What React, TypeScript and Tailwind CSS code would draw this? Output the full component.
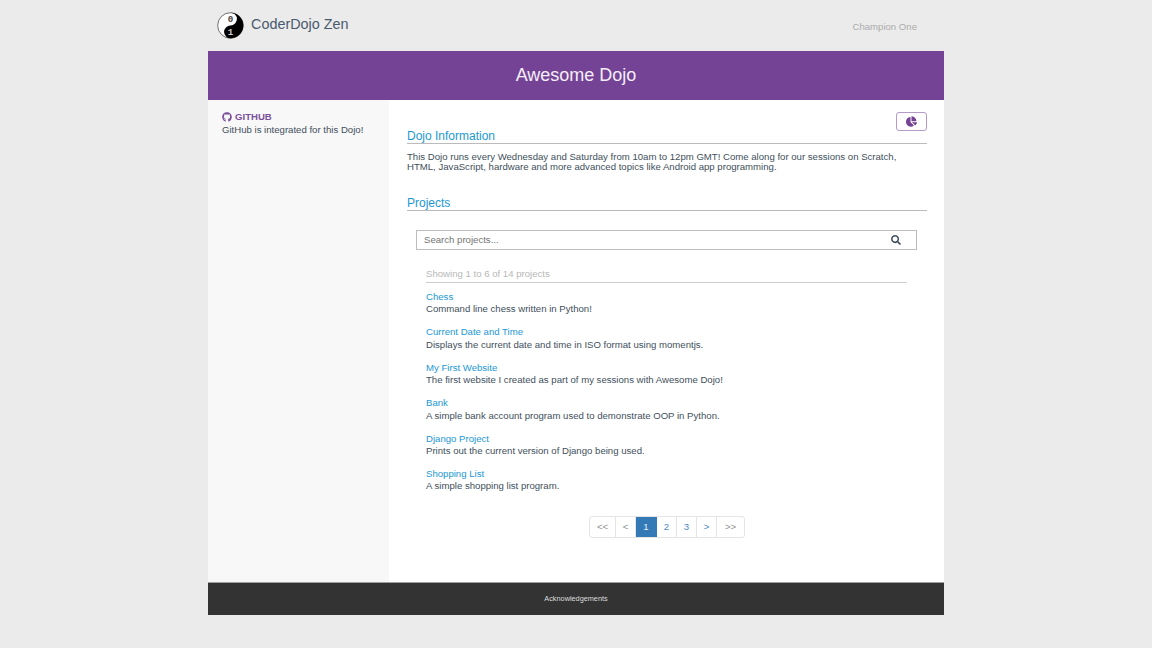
import { FaGithub, FaChartPie, FaSearch } from "react-icons/fa";

const projects = [
  { name: "Chess", desc: "Command line chess written in Python!" },
  { name: "Current Date and Time", desc: "Displays the current date and time in ISO format using momentjs." },
  { name: "My First Website", desc: "The first website I created as part of my sessions with Awesome Dojo!" },
  { name: "Bank", desc: "A simple bank account program used to demonstrate OOP in Python." },
  { name: "Django Project", desc: "Prints out the current version of Django being used." },
  { name: "Shopping List", desc: "A simple shopping list program." },
];

const pages = [
  { label: "<<", w: "w-[26px]" },
  { label: "<", w: "w-[20px]" },
  { label: "1", w: "w-[21px]", active: true },
  { label: "2", w: "w-[20px]", link: true },
  { label: "3", w: "w-[20px]", link: true },
  { label: ">", w: "w-[20px]", link: true },
  { label: ">>", w: "w-[27px]" },
];

function Logo() {
  return (
    <svg width="27" height="27" viewBox="0 0 28 28" className="shrink-0">
      <circle cx="14" cy="14" r="13.3" fill="#fff" stroke="#444" strokeWidth="0.8" />
      <path d="M14 .7a13.3 13.3 0 0 1 0 26.6a6.65 6.65 0 0 1 0-13.3a6.65 6.65 0 0 0 0-13.3z" fill="#000" />
      <circle cx="14" cy="7.4" r="5" fill="#fff" />
      <circle cx="14" cy="20.6" r="5" fill="#000" />
      <text x="14" y="10.8" textAnchor="middle" fontSize="9.5" fontFamily="Liberation Mono, monospace" fontWeight="700" fill="#444">0</text>
      <text x="14" y="24" textAnchor="middle" fontSize="9.5" fontFamily="Liberation Mono, monospace" fontWeight="700" fill="#ccc">1</text>
    </svg>
  );
}

export default function App() {
  return (
    <div className="min-h-[648px] bg-[#ebebeb] font-['Liberation_Sans',Arial,sans-serif] text-[9.6px] text-[#424f5c]">
      <div className="mx-auto w-[736px]">
        {/* Top bar */}
        <div className="flex h-[51px] items-center justify-between pl-[9px] pr-[27px]">
          <div className="flex items-center gap-[7px]">
            <Logo />
            <span className="mt-[-1px] text-[14.4px] text-[#4a5a6d]">CoderDojo Zen</span>
          </div>
          <span className="mt-[4px] text-[#ababab]">Champion One</span>
        </div>

        {/* Banner */}
        <div className="flex h-[49px] items-center justify-center bg-[#744395] text-[18px] text-[#f4eff7]">
          Awesome Dojo
        </div>

        <div className="flex h-[482px] bg-white">
          {/* Sidebar */}
          <div className="w-[181px] shrink-0 bg-[#f8f8f8] pl-[14px] pt-[11px]">
            <div className="flex items-center gap-[3px] font-bold leading-[12px] text-[#7d519b]">
              <FaGithub className="text-[10px]" />
              GITHUB
            </div>
            <p className="mt-[1px] leading-[12px]">GitHub is integrated for this Dojo!</p>
          </div>

          {/* Main */}
          <div className="flex-1 pl-[18px] pr-[17px] pt-[12px]">
            <div className="flex justify-end">
              <button className="flex h-[19px] w-[31px] items-center justify-center rounded-[3px] border border-[#b49ac8] text-[#744395]">
                <FaChartPie className="text-[11px]" />
              </button>
            </div>

            <h2 className="mt-[-3px] border-b border-[#bbbbbb] pt-[1px] text-[12px] leading-[14px] text-[#1b98d4]">Dojo Information</h2>
            <p className="mt-[8px] leading-[10px]">
              This Dojo runs every Wednesday and Saturday from 10am to 12pm GMT! Come along for our sessions on Scratch,
              HTML, JavaScript, hardware and more advanced topics like Android app programming.
            </p>

            <h2 className="mt-[23px] border-b border-[#bbbbbb] pt-[1px] text-[12px] leading-[14px] text-[#1b98d4]">Projects</h2>

            <div className="ml-[9px] mr-[10px] mt-[19px] flex h-[20px] items-center justify-between border border-[#bdbdbd] pl-[7px] pr-[15px]">
              <span className="text-[#757575]">Search projects...</span>
              <FaSearch className="text-[10px] text-[#424f5c]" />
            </div>

            <div className="ml-[19px] mr-[20px] mt-[17px]">
              <div className="border-b border-[#cccccc] pb-[2px] leading-[13px] text-[#b8b8b8]">Showing 1 to 6 of 14 projects</div>
              <div className="mt-[8px] flex flex-col gap-[10.6px]">
                {projects.map((p) => (
                  <div key={p.name} className="leading-[12.4px]">
                    <div className="text-[#1b98d4]">{p.name}</div>
                    <div>{p.desc}</div>
                  </div>
                ))}
              </div>
            </div>

            <div className="mt-[23px] flex justify-center">
              <div className="flex h-[22px] rounded-[3px] border border-[#e5e5e5]">
                {pages.map((p) => (
                  <span
                    key={p.label}
                    className={
                      p.w +
                      " flex items-center justify-center border-r border-[#e5e5e5] last:border-r-0 " +
                      (p.active ? "bg-[#337ab7] border-r-[#337ab7] text-[#e8f0f7]" : p.link ? "text-[#4a8bc2]" : "text-[#8f8f8f]")
                    }
                  >
                    {p.label}
                  </span>
                ))}
              </div>
            </div>
          </div>
        </div>

        {/* Footer */}
        <div className="flex h-[33px] items-center justify-center border-t border-[#a0a0a0] bg-[#333333] text-[7.3px] text-[#dddddd]">
          Acknowledgements
        </div>
      </div>
    </div>
  );
}
